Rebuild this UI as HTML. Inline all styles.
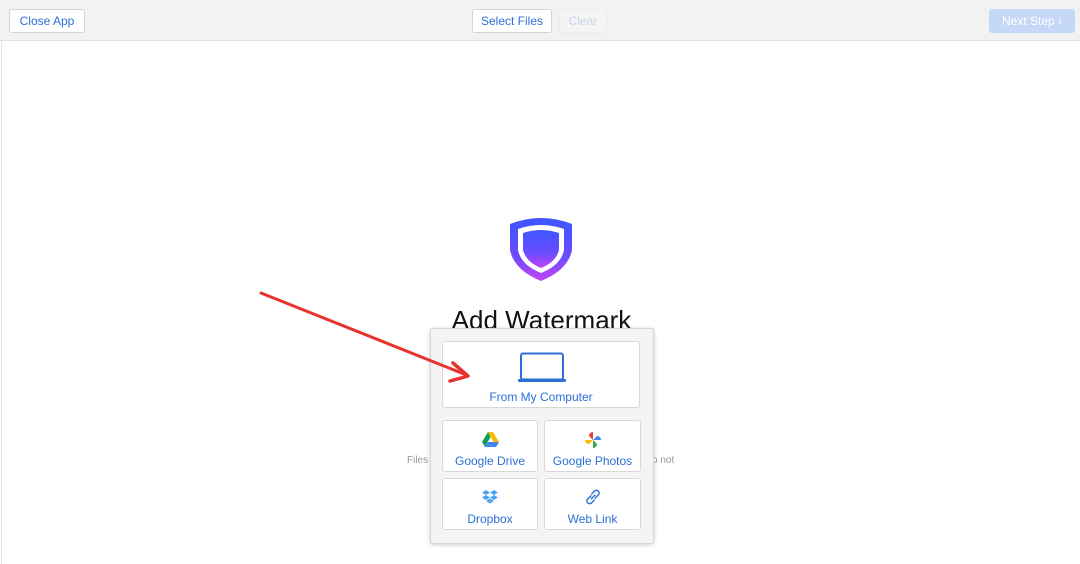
<!DOCTYPE html><html><head><style>
body{margin:0;width:1080px;height:564px;background:#fff;font-family:"Liberation Sans",sans-serif;position:relative;overflow:hidden}
.top{position:absolute;left:0;top:0;width:1080px;height:40px;background:#f2f2f2;border-bottom:1px solid #e2e2e2}
.btn{position:absolute;height:22px;background:#fff;border:1px solid #d4d4d4;border-radius:3px;color:#2c6fd6;font-size:12px;line-height:22px;text-align:center}
.side{position:absolute;left:1px;top:41px;width:1px;height:523px;background:#e6e6e6}
.pop{position:absolute;left:430px;top:328px;width:222px;height:214px;background:#f4f4f4;border:1px solid #d6d6d6;border-radius:3px;box-shadow:0 1px 4px rgba(0,0,0,.2)}
.c{position:absolute;background:#fff;border:1px solid #d8d8d8;border-radius:3px;color:#2c6fd6;font-size:12px;text-align:center}
.c span{position:absolute;left:0;right:0}
</style></head><body>
<div class="top"></div>
<div class="btn" style="left:9px;top:9px;width:74px">Close App</div>
<div class="btn" style="left:472px;top:9px;width:78px">Select Files</div>
<div class="btn" style="left:559px;top:9px;width:46px;color:#c8d6ec;background:#f4f4f4;border-color:#ececec">Clear</div>
<div class="btn" style="left:989px;top:9px;width:84px;background:#c5d8f7;border-color:#c5d8f7;color:#fff">Next Step ›</div>
<div class="side"></div>
<svg style="position:absolute;left:506px;top:214px" width="70" height="70" viewBox="0 0 70 70">
<defs><linearGradient id="g" x1="0" y1="0" x2="0" y2="1"><stop offset="0" stop-color="#3d55ff"/><stop offset=".6" stop-color="#6a4cff"/><stop offset="1" stop-color="#c444f5"/></linearGradient></defs>
<path d="M4 10 Q35 -2 66 10 L66 36 Q62 56 35 67 Q8 56 4 36Z" fill="url(#g)"/>
<path d="M12 15 Q35 7 58 15 L58 36 Q55 51 35 59 Q15 51 12 36Z" fill="#fff"/>
<path d="M17 19 Q35 13 53 19 L53 36 Q50 48 35 54 Q20 48 17 36Z" fill="url(#g)"/>
</svg>
<div style="position:absolute;left:0;width:1083px;top:305px;text-align:center;font-size:26px;color:#111">Add Watermark</div>
<div style="position:absolute;left:407px;top:455px;font-size:10px;color:#999">Files</div>
<div style="position:absolute;left:652px;top:455px;font-size:10px;color:#999">o not</div>
<div class="pop"></div>
<div class="c" style="left:442px;top:341px;width:196px;height:65px">
<svg style="position:absolute;left:75px;top:10px" width="48" height="32" viewBox="0 0 48 32"><rect x="3" y="1.5" width="42" height="26" rx="2" fill="none" stroke="#2c6fd6" stroke-width="2"/><rect x="0" y="27" width="48" height="3" rx="1" fill="#2c6fd6"/></svg>
<span style="top:48px">From My Computer</span></div>
<div class="c" style="left:442px;top:420px;width:94px;height:50px">
<svg style="position:absolute;left:39px;top:11px" width="17" height="15" viewBox="0 0 17 15"><path d="M6 0 L11 0 L17 10 L14 15Z" fill="#fbbc04"/><path d="M6 0 L0 10 L3 15 L8.5 5Z" fill="#0f9d58"/><path d="M3 15 L14 15 L17 10 L6 10Z" fill="#4285f4"/></svg>
<span style="top:33px">Google Drive</span></div>
<div class="c" style="left:544px;top:420px;width:95px;height:50px">
<svg style="position:absolute;left:40px;top:11px" width="16" height="16" viewBox="0 0 16 16"><path d="M8 8 L8 0 A4 4 0 0 0 4 4Z" fill="#ea4335"/><path d="M8 8 L16 8 A4 4 0 0 0 12 4Z" fill="#4285f4"/><path d="M8 8 L8 16 A4 4 0 0 0 12 12Z" fill="#34a853"/><path d="M8 8 L0 8 A4 4 0 0 0 4 12Z" fill="#fbbc04"/></svg>
<span style="top:33px">Google Photos</span></div>
<div class="c" style="left:442px;top:478px;width:94px;height:50px">
<svg style="position:absolute;left:39px;top:11px" width="16" height="15" viewBox="0 0 16 15"><path d="M4 0 L8 2.5 L4 5 L0 2.5Z M12 0 L16 2.5 L12 5 L8 2.5Z M4 5 L8 7.5 L4 10 L0 7.5Z M12 5 L16 7.5 L12 10 L8 7.5Z M4 11 L8 8.5 L12 11 L8 13.5Z" fill="#4aa3f0"/></svg>
<span style="top:33px">Dropbox</span></div>
<div class="c" style="left:544px;top:478px;width:95px;height:50px">
<svg style="position:absolute;left:38px;top:8px" width="20" height="20" viewBox="0 0 18 18" fill="none" stroke="#2c6fd6" stroke-width="1.3"><path d="M7 11 L11 7"/><path d="M7.5 7.5 L4 11 A2.5 2.5 0 0 0 7.5 14.5 L10.5 11.5"/><path d="M10.5 10.5 L14 7 A2.5 2.5 0 0 0 10.5 3.5 L7.5 6.5"/></svg>
<span style="top:33px">Web Link</span></div>
<svg style="position:absolute;left:0;top:0" width="1080" height="564"><line x1="261" y1="293" x2="464" y2="374" stroke="#e8322e" stroke-width="3" stroke-linecap="round"/><path d="M453 363 L468 376 L450 381" fill="none" stroke="#e8322e" stroke-width="3.5" stroke-linecap="round" stroke-linejoin="round"/></svg>
</body></html>
